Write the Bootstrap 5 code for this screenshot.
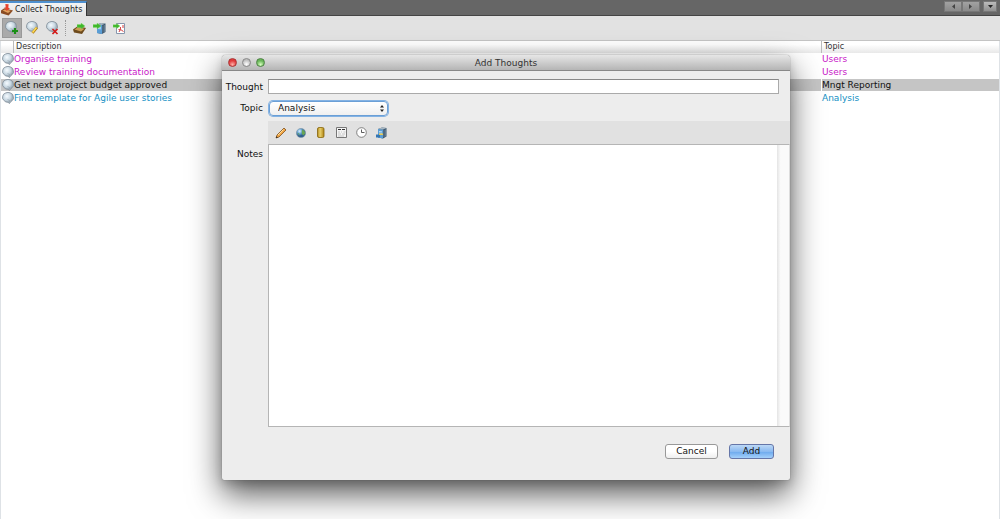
<!DOCTYPE html>
<html lang="en">
<head>
<meta charset="utf-8">
<meta name="viewport" content="width=device-width, initial-scale=1">
<title>Collect Thoughts</title>
<link href="https://cdn.jsdelivr.net/npm/bootstrap@5.3.0/dist/css/bootstrap.min.css" rel="stylesheet">
<style>
  body { font-size: 9px; line-height: 12px; color: #111; background: #fff; }
  body, button, input, select, textarea { font-family: "DejaVu Sans", sans-serif; }
  svg { display: block; flex: none; }
  .tabstrip { height: 16px; background: #666; border-bottom: 1px solid #444; }
  .doc-tab { height: 15px; padding: 0 4px 0 1px; gap: 2px; font-size: 8px; background: linear-gradient(#f4f4f4, #e2e2e2); border-top: 2px solid #4f90cf; border-right: 1px solid #333; color: #222; margin-top: 1px; }
  .nav-set { padding: 1px 3px 3px 0; }
  .nav-btn { width: 18px; height: 11px; padding: 0; border: 1px solid #777; background: linear-gradient(#a2a2a2, #8a8a8a); }
  .nav-btn.drop { width: 14px; margin-left: 3px; background: linear-gradient(#bbb, #909090); }
  .nav-btn svg { margin: auto; }
  .tools { height: 25px; padding: 0 2px; background: #e2e2e2; border-bottom: 1px solid #c4c4c4; }
  .tool { border: 1px solid transparent; background: none; padding: 0; width: 20px; height: 20px; display: flex; align-items: center; justify-content: center; }
  .tool.on { background: #aaa; border-color: #999; }
  .tools .sep { border-left: 1px dotted #999; height: 16px; margin: 0 3px; }
  .thoughts { table-layout: fixed; width: 100%; margin: 0; border-collapse: separate; border-spacing: 0; }
  .thoughts th { height: 12px; line-height: 12px; padding: 0; font-weight: 400; font-size: 8px; color: #333; background: linear-gradient(#fff 30%, #e8e8e8); }
  .thoughts th span { border-left: 1px solid #bbb; padding-left: 2px; display: block; }
  .thoughts td { height: 13px; line-height: 13px; padding: 0; white-space: nowrap; }
  .thoughts td.first { padding-left: 1px; }
  .thoughts th.first { padding-left: 12px; }
  .thoughts .topic { width: 178px; }
  .thoughts td.topic { border-left: 1px solid #fff; }
  .thoughts tr.picked td { background: linear-gradient(#c5c5c5, #c5c5c5) 0 0 / 100% 12px no-repeat; }
  .pink { color: #c918c9; } .blue { color: #1590c4; }
  .dialog-box { left: 22.2vw; width: 56.8vw; top: 55px; bottom: 39px; background: #ededed; border-radius: 4px 4px 2px 2px; box-shadow: 0 0 1px #555, 0 4px 10px rgba(0,0,0,.15), 0 14px 32px rgba(0,0,0,.66); }
  .titlebar { height: 16px; flex: none; padding: 0 6px; border-radius: 4px 4px 0 0; background: linear-gradient(#e6e6e6, #b5b5b5); border-bottom: 1px solid #888; }
  .lamp { width: 9px; height: 9px; margin-right: 5px; padding: 0; border-radius: 50%; border: 1px solid #888; background: radial-gradient(circle at 50% 75%, #fff, #bbb 70%); }
  .lamp.red { background: radial-gradient(circle at 50% 80%, #ffb0a8, #e0393a 60%); border-color: #a33; }
  .lamp.green { background: radial-gradient(circle at 50% 80%, #d8ffc0, #68b558 60%); border-color: #4c8242; }
  .caption { color: #333; padding-right: 42px; }
  .form-area { display: grid; grid-template-columns: 41px 1fr; column-gap: 5px; grid-template-rows: 16px 26px 23px 1fr; flex: 1; padding-top: 8px; }
  .form-area label { text-align: right; padding-top: 2px; }
  .form-area .tall { padding-top: 4px; }
  .thought-box { height: 15px; border: 1px solid #aaa; border-top-color: #888; margin-right: 11px; padding: 0 3px; background: #fff; }
  .select-box { width: 119px; height: 15px; margin-left: 1px; align-self: center; position: relative; }
  .select-box select { appearance: none; width: 100%; height: 15px; padding: 0 8px; line-height: 13px; border: 1px solid #6b9fd6; border-radius: 4px; background: linear-gradient(#fff, #f0f0f0); box-shadow: 0 0 0 1px #84b3e4; color: #111; outline: 0; display: block; }
  .select-box svg { position: absolute; right: 4px; top: 4px; pointer-events: none; }
  .notes-tools { background: #e1e1e1; padding-left: 3px; }
  .notes-box { resize: none; border: 1px solid #b5b5b5; border-right-color: #ddd; padding: 2px; width: 100%; height: 100%; background: linear-gradient(90deg, #e4e4e4, #fafafa 30%) right / 12px 100% no-repeat #fff; display: block; }
  .actions { flex: none; height: 53px; padding: 0 16px 4px 0; gap: 11px; }
  .push { height: 15px; padding: 0; line-height: 13px; border: 1px solid #999; border-radius: 3px; background: linear-gradient(#fff 50%, #efefef); color: #111; width: 53px; }
  .push.go { width: 45px; border-color: #6576a8; background: linear-gradient(#bcd8f6, #8abaf1 50%, #6fabee 55%, #a4d0fa); }
</style>
</head>
<body class="vh-100 d-flex flex-column overflow-hidden">
<svg width="0" height="0" class="position-absolute" aria-hidden="true">
  <defs>
    <radialGradient id="glass" cx="40%" cy="35%"><stop offset="0" stop-color="#f6fbff"/><stop offset=".7" stop-color="#c9d8e2"/><stop offset="1" stop-color="#a5b4c0"/></radialGradient>
    <radialGradient id="earth" cx="35%" cy="30%"><stop offset="0" stop-color="#d9f0ff"/><stop offset=".6" stop-color="#5d9bd0"/><stop offset="1" stop-color="#30608f"/></radialGradient>
    <linearGradient id="gold"><stop offset="0" stop-color="#b28a1c"/><stop offset=".4" stop-color="#e9d06c"/><stop offset="1" stop-color="#b08414"/></linearGradient>
    <symbol id="cloud" viewBox="0 0 12 12"><path d="M3.500 1Q6 -.4 8.500 1Q11.200 1.800 11.300 4.500Q12.200 7 10 8.800L9 9.300 7.500 11.500 6 10.300Q3 10.500 2.200 8.500Q-.2 7 .7 4.200Q1 1.800 3.500 1Z" fill="url(#glass)" stroke="#7d8a95" stroke-width=".8"/><path d="M5.500 7.500l2 .8-.3 1.800" fill="none" stroke="#91a0ac" stroke-width=".6"/></symbol>
    <symbol id="arrow" viewBox="0 0 8 6"><path d="M0 1.500h4V0l4 3-4 3V4.500H0z" fill="#40b82b" stroke="#8bdc72" stroke-width=".4"/></symbol>
    <symbol id="server" viewBox="0 0 12 12"><path d="M3 2L7 .5 11.500 1V9.500L8 11.500 3 10.500z" fill="#3c5870"/><path d="M3 2L8 2.500V11.500L3 10.500z" fill="#5a9ed6"/><path d="M3 2L7 .5 11.500 1 8 2.500z" fill="#a8b7c2"/><path d="M4 4.500l3 .3M4 6l3 .3" stroke="#cfeaff" stroke-width=".8"/><path d="M9 3v7M10.500 2.500v7" stroke="#7890a2" stroke-width=".6"/></symbol>
  </defs>
</svg>

<header class="tabstrip d-flex justify-content-between flex-shrink-0">
  <div class="doc-tab d-flex align-items-center">
    <svg width="12" height="12" viewBox="0 0 11 11"><path d="M0 6l3-2 8 2-4 4.500L0 8.500z" fill="#8a4b22"/><path d="M1.500 6l2-1 5.500 1.300-2.500 2z" fill="#e0a15c"/><path d="M4 0l3 .3-.3 3.200 1.500.3-3 2.700-2.200-3.500 1.300.2z" fill="#e8432c"/></svg>
    <span>Collect Thoughts</span>
  </div>
  <div class="nav-set d-flex align-items-center">
    <button class="nav-btn" aria-label="Previous"><svg width="4" height="5"><path d="M4 0v5L1 2.500z" fill="#444"/></svg></button>
    <button class="nav-btn" aria-label="Next"><svg width="4" height="5"><path d="M0 0v5l3-2.500z" fill="#444"/></svg></button>
    <button class="nav-btn drop" aria-label="List tabs"><svg width="5" height="4"><path d="M0 0h5L2.500 3z" fill="#222"/></svg></button>
  </div>
</header>

<nav class="tools d-flex align-items-center flex-shrink-0" aria-label="Thought actions">
  <button class="tool on" aria-label="Add"><svg width="14" height="14" viewBox="0 0 14 14"><use href="#cloud" width="12" height="12"/><path d="M10 7v6M7 10h6" stroke="#1a8f16" stroke-width="2.200"/></svg></button>
  <button class="tool" aria-label="Edit"><svg width="14" height="14" viewBox="0 0 14 14"><use href="#cloud" x="1" width="12" height="12"/><path d="M12 6.500L7.500 12" stroke="#b27f18" stroke-width="2.600"/><path d="M11.500 6.500L7.500 11.500" stroke="#ffdf58" stroke-width="1.400"/></svg></button>
  <button class="tool" aria-label="Delete"><svg width="14" height="14" viewBox="0 0 14 14"><use href="#cloud" x="1" width="12" height="12"/><path d="M7.500 8l5 5M12.500 8l-5 5" stroke="#d31616" stroke-width="1.600"/></svg></button>
  <span class="sep"></span>
  <button class="tool" aria-label="Process"><svg width="13" height="13" viewBox="0 0 13 13"><path d="M0 7.500L5 4l8 2-4 6L1 10.500z" fill="#6d4a1c"/><path d="M1.500 7.500L5 5.200 11.500 6.700 8 9.500z" fill="#c99c56"/><use href="#arrow" x="4" y="1" width="8" height="6"/></svg></button>
  <button class="tool" aria-label="Import"><svg width="13" height="13" viewBox="0 0 13 13"><use href="#server" x="1" width="12" height="13"/><use href="#arrow" x="0" y="1" width="8" height="6"/></svg></button>
  <button class="tool" aria-label="Export to PDF"><svg width="13" height="13" viewBox="0 0 13 13"><path d="M3.500 1.500h8v10h-8z" fill="#fff" stroke="#8796ac"/><path d="M6 10q2-3 1.500-5M5.500 7.500q3 0 5 2M10 3v3" stroke="#d43b3b" fill="none"/><use href="#arrow" x="0" y="1" width="7" height="6"/></svg></button>
</nav>

<main class="flex-grow-1 border-start border-end">
  <table class="thoughts">
    <thead><tr><th class="first" scope="col"><span>Description</span></th><th class="topic" scope="col"><span>Topic</span></th></tr></thead>
    <tbody>
      <tr class="pink"><td class="first"><div class="d-flex"><svg width="12" height="12"><use href="#cloud" width="12" height="12"/></svg>Organise training</div></td><td class="topic">Users</td></tr>
      <tr class="pink"><td class="first"><div class="d-flex"><svg width="12" height="12"><use href="#cloud" width="12" height="12"/></svg>Review training documentation</div></td><td class="topic">Users</td></tr>
      <tr class="picked"><td class="first"><div class="d-flex"><svg width="12" height="12"><use href="#cloud" width="12" height="12"/></svg>Get next project budget approved</div></td><td class="topic">Mngt Reporting</td></tr>
      <tr class="blue"><td class="first"><div class="d-flex"><svg width="12" height="12"><use href="#cloud" width="12" height="12"/></svg>Find template for Agile user stories</div></td><td class="topic">Analysis</td></tr>
    </tbody>
  </table>
</main>

<section class="dialog-box position-absolute d-flex flex-column" role="dialog" aria-labelledby="caption">
  <div class="titlebar d-flex align-items-center">
    <button class="lamp red" aria-label="Close"></button><button class="lamp" aria-label="Minimise"></button><button class="lamp green" aria-label="Zoom"></button>
    <div id="caption" class="caption flex-grow-1 text-center">Add Thoughts</div>
  </div>
  <form class="form-area">
    <label for="thought">Thought</label>
    <input id="thought" class="thought-box" type="text">
    <label for="topic" class="align-self-center pt-0">Topic</label>
    <div class="select-box"><select id="topic"><option>Analysis</option><option>Users</option><option>Mngt Reporting</option></select>
      <svg width="4" height="7" viewBox="0 0 4 7"><path d="M0 2.600L2 0 4 2.600zM0 4.400h4L2 7z" fill="#222"/></svg></div>
    <span></span>
    <div class="notes-tools d-flex align-items-center">
      <button type="button" class="tool" aria-label="Edit"><svg width="12" height="12" viewBox="0 0 12 12"><path d="M9 1l2 2-7 7-3 1 1-3z" fill="#f2a645" stroke="#70400f" stroke-width=".7"/><path d="M8.500 2.500L3 8" stroke="#ffe1a0"/><path d="M1 11l.6-1.800 1.200 1.200z" fill="#222"/></svg></button>
      <button type="button" class="tool" aria-label="Link"><svg width="10" height="10" viewBox="0 0 10 10"><circle cx="5" cy="5" r="4.600" fill="url(#earth)" stroke="#7b93a6" stroke-width=".6"/><path d="M6 1.500l2.500 1.500.7 2.500-2 2-1.500-2zM1 4.500l2 1 .8 2.500z" fill="#68a653"/></svg></button>
      <button type="button" class="tool" aria-label="Database"><svg width="8" height="11" viewBox="0 0 8 11"><rect x=".5" y=".5" width="6.500" height="10" rx="1.500" fill="url(#gold)" stroke="#86640b" stroke-width=".8"/></svg></button>
      <button type="button" class="tool" aria-label="Date"><svg width="11" height="11" viewBox="0 0 11 11"><path d="M.5 .5h10v10H.5z" fill="#f4f4f4" stroke="#777"/><path d="M2 2.500h3M6 2.500h3" stroke="#333"/><path d="M2 5h2M5 5h1M7.500 5h2M2 7h3M6 7h3M2 9h6" stroke="#bbb" stroke-width=".8"/></svg></button>
      <button type="button" class="tool" aria-label="Time"><svg width="11" height="11" viewBox="0 0 11 11"><circle cx="5.500" cy="5.500" r="4.800" fill="#fff" stroke="#666" stroke-width=".8"/><path d="M5.500 2.500v3h3" fill="none" stroke="#333" stroke-width=".8"/></svg></button>
      <button type="button" class="tool" aria-label="File"><svg width="12" height="12"><use href="#server" width="12" height="12"/><path d="M1 7.500h4v3H1z" fill="#3376b4"/><path d="M4 6.500h4v1.500H4z" fill="#e9c84b"/></svg></button>
    </div>
    <label for="notes" class="tall">Notes</label>
    <textarea id="notes" class="notes-box"></textarea>
  </form>
  <div class="actions d-flex justify-content-end align-items-center">
    <button class="push">Cancel</button>
    <button class="push go">Add</button>
  </div>
</section>
<script src="https://cdn.jsdelivr.net/npm/bootstrap@5.3.0/dist/js/bootstrap.bundle.min.js"></script>
</body>
</html>
